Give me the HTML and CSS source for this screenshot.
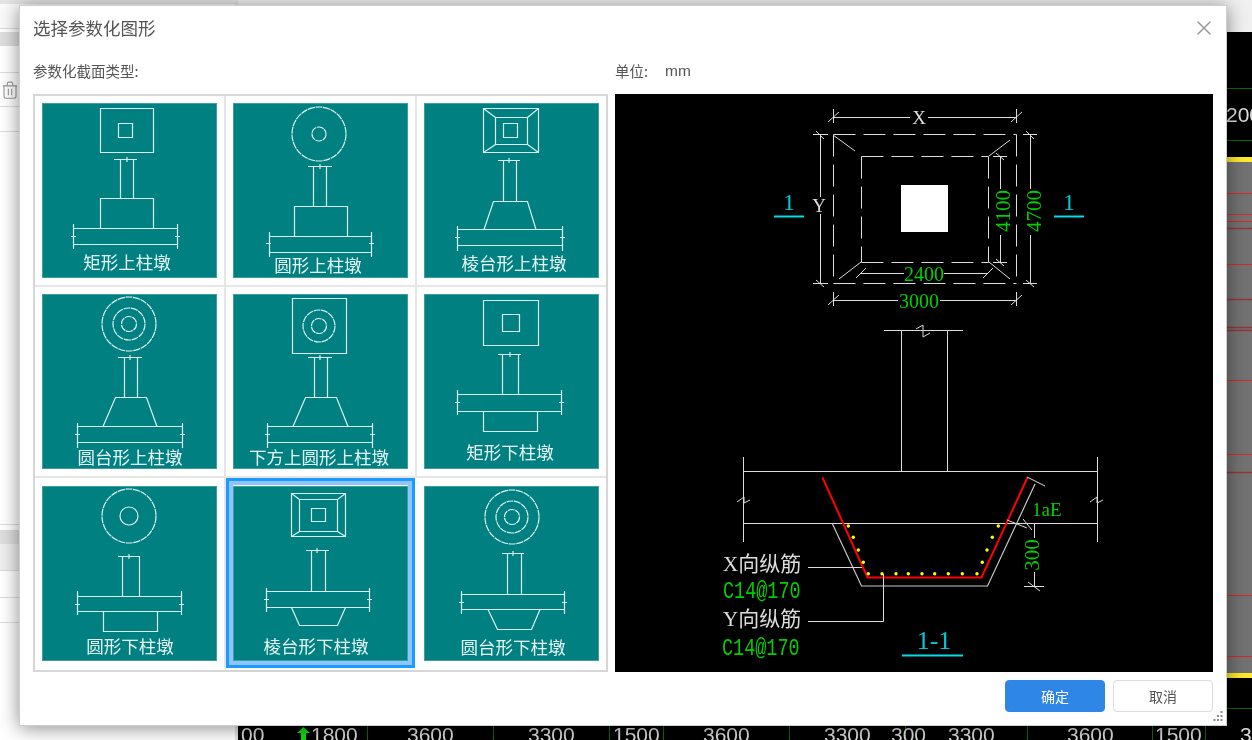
FILE: index.html
```html
<!DOCTYPE html>
<html lang="zh-CN">
<head>
<meta charset="utf-8">
<title>选择参数化图形</title>
<link rel="stylesheet" href="styles.css">
</head>
<body>
<div class="app">
  <aside class="side">
    <div class="side-tabs"></div>
    <div class="side-band"></div>
    <div class="side-row side-row-a"></div>
    <div class="side-row side-row-trash">
      <svg class="trash" width="16" height="18" viewBox="2 1 14 16.500"><path d="M2.500 5.500H15.500M6.500 5.500V3.500Q6.500 2 8 2H10Q11.500 2 11.500 3.500V5.500M3.500 5.500V15Q3.500 16.800 5.300 16.800H12.700Q14.500 16.800 14.500 15V5.500M7.500 8V14M10.500 8V14"/></svg>
    </div>
    <div class="side-row side-row-b"></div>
    <div class="side-spacer"></div>
    <div class="side-row side-row-c"></div>
    <div class="side-band side-band-b"></div>
    <div class="side-row side-row-d"></div>
    <div class="side-row side-row-e"></div>
    <div class="side-row side-row-f"></div>
  </aside>
  <svg class="cad" width="1014" height="740" viewBox="238 0 1014 740">
    <rect x="238" y="0" width="1014" height="32" fill="#f0f0f0"/>
    <rect x="238" y="32" width="1014" height="126" fill="#000"/>
    <rect x="238" y="157" width="1014" height="5" fill="#ffe92e"/>
    <rect x="238" y="162" width="1014" height="511" fill="#727272"/>
    <rect x="238" y="673" width="1014" height="5" fill="#ffe92e"/>
    <rect x="238" y="678" width="1014" height="62" fill="#000"/>
    <path class="cad-green" d="M238 88.500H1252M238 140.500H1252M238 708.500H1252M367.500 726V740M493.500 726V740M609.500 726V740M663.500 726V740M789.500 726V740M905.500 726V740M1027.500 726V740M1152.500 726V740M1205.500 726V740"/>
    <path class="cad-red" d="M1227 193.500H1252M1227 214.500H1252M1227 221.500H1252M1227 264.500H1252M1227 380.500H1252M1227 454.500H1252M1227 595.500H1252M1227 656.500H1252"/>
    <path class="cad-red-dim" d="M1227 228.500H1252M1227 299.500H1252M1227 327.500H1252M1227 330.500H1252M1227 472.500H1252"/>
    <polygon class="cad-arrow" points="303.500,727 310,733 306,733 306,740 301,740 301,733 297,733"/>
    <text class="cad-num" x="1226" y="122">200</text>
    <text class="cad-num" x="241" y="742">00</text>
    <text class="cad-num" x="311" y="742">1800</text>
    <text class="cad-num" x="407" y="742">3600</text>
    <text class="cad-num" x="528" y="742">3300</text>
    <text class="cad-num" x="613" y="742">1500</text>
    <text class="cad-num" x="703" y="742">3600</text>
    <text class="cad-num" x="824" y="742">3300</text>
    <text class="cad-num" x="891" y="742">300</text>
    <text class="cad-num" x="948" y="742">3300</text>
    <text class="cad-num" x="1067" y="742">3600</text>
    <text class="cad-num" x="1155" y="742">1500</text>
    <text class="cad-num" x="1240" y="742">3</text>
  </svg>

  <section class="dialog">
    <header class="dialog-head">
      <h1 class="dialog-title">选择参数化图形</h1>
      <svg class="dialog-close" width="16" height="16" viewBox="0 0 16 16"><path d="M1.500 1.500L14.500 14.500M14.500 1.500L1.500 14.500"/></svg>
    </header>
    <div class="dialog-labels">
      <div class="label-left">参数化截面类型:</div>
      <div class="label-right"><span>单位:</span><span class="unit">mm</span></div>
    </div>
    <div class="dialog-body">
      <div class="picker">
        <div class="cell">
          <svg class="tile" width="175" height="175" viewBox="0 0 175 175">
            <path class="ln" d="M58.500 5.500H111.500V49.500H58.500ZM76.500 20.500H90.500V34.500H76.500ZM72 56.500H95M85 54V59M78.500 56.500V95.500M91.500 56.500V95.500M58.500 125.500V95.500H111.500V125.500M31 125.500H135M31 141.500H135M31.500 121V146M135.500 121V146M29 133.500H34M133 133.500H138"/>
            <text class="cap" x="85" y="160">矩形上柱墩</text>
          </svg>
        </div>
        <div class="cell">
          <svg class="tile" width="175" height="175" viewBox="0 0 175 175">
            <circle class="ln dot" cx="86" cy="31" r="27"/><circle class="ln dot" cx="86" cy="31" r="7"/>
            <path class="ln" d="M75 63.500H99M87 61V66M80.500 63.500V103.500M93.500 63.500V103.500M61.500 133.500V103.500H114.500V133.500M36 133.500H138M36 149.500H138M36.500 129V154M138.500 129V154M33 140.500H38M136 140.500H141"/>
            <text class="cap" x="85" y="163">圆形上柱墩</text>
          </svg>
        </div>
        <div class="cell cell-end">
          <svg class="tile" width="175" height="175" viewBox="0 0 175 175">
            <path class="ln" d="M59.500 5.500H114.500V49.500H59.500ZM71.500 14.500H103.500V41.500H71.500ZM79.500 20.500H93.500V34.500H79.500ZM59.500 5.500L71.500 14.500M114.500 5.500L103.500 14.500M59.500 49.500L71.500 41.500M114.500 49.500L103.500 41.500M74 57.500H96M85 55V60M79.500 57.500V98.500M92.500 57.500V98.500M60 126.500L69.500 98.500H103.500L112 126.500M33 126.500H138M33 142.500H138M33.500 123V148M138.500 123V148M31 134.500H36M136 134.500H141"/>
            <text class="cap" x="90" y="161.500">棱台形上柱墩</text>
          </svg>
        </div>
        <div class="cell">
          <svg class="tile" width="175" height="175" viewBox="0 0 175 175">
            <circle class="ln dot" cx="87" cy="30" r="27"/><circle class="ln dot" cx="87" cy="30" r="16"/><circle class="ln dot" cx="87" cy="30" r="7.500"/>
            <path class="ln" d="M76 63.500H100M88 61V66M82.500 63.500V103.500M95.500 63.500V103.500M61 132.500L73.500 103.500H104.500L115 132.500M35 132.500H140M35 148.500H140M35.500 129V154M140.500 129V154M33 140.500H38M138 140.500H143"/>
            <text class="cap" x="88" y="164">圆台形上柱墩</text>
          </svg>
        </div>
        <div class="cell">
          <svg class="tile" width="175" height="175" viewBox="0 0 175 175">
            <path class="ln" d="M59.500 4.500H113.500V59.500H59.500Z"/>
            <circle class="ln dot" cx="86" cy="32" r="16"/><circle class="ln dot" cx="86" cy="32" r="7.500"/>
            <path class="ln" d="M75 63.500H99M87 61V66M81.500 63.500V103.500M94.500 63.500V103.500M60 132.500L72.500 103.500H103.500L115 132.500M34 132.500H139M34 148.500H139M34.500 129V154M139.500 129V154M32 140.500H37M137 140.500H142"/>
            <text class="cap" x="86" y="164">下方上圆形上柱墩</text>
          </svg>
        </div>
        <div class="cell cell-end">
          <svg class="tile" width="175" height="175" viewBox="0 0 175 175">
            <path class="ln" d="M59.500 6.500H114.500V51.500H59.500ZM78.500 20.500H95.500V37.500H78.500ZM74 60.500H97M86 58V63M78.500 60.500V100.500M94.500 60.500V100.500M33 100.500H137M33 117.500H137M33.500 96V121M137.500 96V121M31 108.500H36M135 108.500H140M59.500 117.500V137.500H113.500V117.500"/>
            <text class="cap" x="86" y="159">矩形下柱墩</text>
          </svg>
        </div>
        <div class="cell cell-low">
          <svg class="tile" width="175" height="175" viewBox="0 0 175 175">
            <circle class="ln dot" cx="87" cy="30" r="27"/><circle class="ln" cx="87" cy="30" r="9"/>
            <path class="ln" d="M76 70.500H98M87 68V73M80.500 70.500V110.500M97.500 70.500V110.500M35 110.500H139M35 125.500H139M35.500 105V129M139.500 105V129M33 118.500H38M137 118.500H142M61.500 125.500V145.500H115.500V125.500"/>
            <text class="cap" x="88" y="161">圆形下柱墩</text>
          </svg>
        </div>
        <div class="cell cell-low cell-selected">
          <svg class="tile" width="175" height="175" viewBox="0 0 175 175">
            <path class="ln" d="M58.500 7.500H112.500V50.500H58.500ZM66.500 13.500H104.500V45.500H66.500ZM78.500 22.500H92.500V35.500H78.500ZM58.500 7.500L66.500 13.500M112.500 7.500L104.500 13.500M58.500 50.500L66.500 45.500M112.500 50.500L104.500 45.500M73 64.500H96M84 62V67M78.500 64.500V105.500M92.500 64.500V105.500M33 105.500H136M33 121.500H136M33.500 102V126M136.500 102V126M31 113.500H36M134 113.500H139M58.500 121.500L66.500 139.500H104.500L112.500 121.500"/>
            <text class="cap" x="83" y="161">棱台形下柱墩</text>
          </svg>
        </div>
        <div class="cell cell-low cell-end">
          <svg class="tile" width="175" height="175" viewBox="0 0 175 175">
            <circle class="ln dot" cx="88" cy="31" r="27"/><circle class="ln dot" cx="88" cy="31" r="16"/><circle class="ln dot" cx="88" cy="31" r="7.500"/>
            <path class="ln" d="M78 67.500H100M89 65V70M83.500 67.500V108.500M97.500 67.500V108.500M37 108.500H140M37 123.500H140M37.500 105V128M140.500 105V128M35 116.500H40M138 116.500H143M64 123.500L73.500 143.500H107.500L116 123.500"/>
            <text class="cap" x="89" y="162">圆台形下柱墩</text>
          </svg>
        </div>
      </div>
      <svg class="preview" width="598" height="578" viewBox="615 94 598 578">
        <rect x="615" y="94" width="598" height="578" fill="#000"/>
        <path class="dw" d="M833.500 109V123M1016.500 109V123M833 117.500H910M928 117.500H1016M828 122L839 112M1011 122L1022 112"/>
        <path class="dw dw-dash" d="M833.500 134.500H1016.500M1016.500 134.500V283.500M833.500 134.500V283.500M833.500 283.500H1016.500M861.500 156.500H988.500M988.500 156.500V262.500M861.500 156.500V262.500M861.500 262.500H988.500"/>
        <path class="dw" d="M833 135L855 151M1010 140L989 156M861 262L839 279M989 262L1010 279"/>
        <rect x="901" y="185" width="47" height="47" fill="#fff"/>
        <path class="dw" d="M820.500 135V197M820.500 214V283M813 134.500H828M813 283.500H828M816 131L824 139M816 280L824 287M1030.500 135V189M1030.500 235V283M1023 134.500H1037M1023 283.500H1037M1026 131L1034 139M1026 280L1034 287M1000.500 156V189M1000.500 235V262M993 156.500H1007M993 262.500H1007M996 153L1004 160M996 259L1004 266M861 273.500H904M944 273.500H988M856 278L866 268M983 278L993 268M833 300.500H898M940 300.500H1016M833.500 292V306M1016.500 292V306M828 305L839 295M1011 305L1022 295"/>
        <text class="dim dim-white" x="919" y="117">X</text>
        <text class="dim dim-white" x="819" y="205">Y</text>
        <text class="dim dim-green dim-flat" x="924" y="274">2400</text>
        <text class="dim dim-green dim-flat" x="919" y="301">3000</text>
        <text class="dim dim-green" x="1003" y="211" transform="rotate(-90 1003 211)">4100</text>
        <text class="dim dim-green" x="1034" y="211" transform="rotate(-90 1034 211)">4700</text>
        <text class="dim dim-cyan" x="789" y="202">1</text>
        <text class="dim dim-cyan" x="1069" y="202">1</text>
        <path class="dc" d="M774 216.500H804M1054 216.500H1084M902 655.500H963"/>

        <path class="dw" d="M884 330.500H963M901.500 331V471M947.500 331V471M916 329L923 325V337L930 333M743.500 457V542M1097.500 457V542M744 471.500H1097M744 523.500H1097M737 502L744 497V503L750 500M1090 502L1097 497V503L1103 500"/>
        <path class="dg" d="M832.500 524L861.500 586H987.500L1035 484"/>
        <path class="dr" d="M822.500 477.500L867.500 577.500H981.500L1027.500 477.500"/>
        <path class="dw" d="M1027 477L1045 486M1007 520L1027 528M1034.500 524V538M1034.500 572V586M1024 586.500H1044M1028 582L1040 591M1023 519L1032 530M808 567.500H862M808 621.500H883.500V574"/>
        <g class="dots">
          <circle cx="868.300" cy="573.700" r="1.700"/><circle cx="882" cy="573.700" r="1.700"/><circle cx="896" cy="573.700" r="1.700"/><circle cx="908.300" cy="573.700" r="1.700"/><circle cx="922" cy="573.700" r="1.700"/><circle cx="934.700" cy="573.700" r="1.700"/><circle cx="948.300" cy="573.700" r="1.700"/><circle cx="962.300" cy="573.700" r="1.700"/><circle cx="977" cy="573.700" r="1.700"/>
          <circle cx="848.300" cy="526" r="1.700"/><circle cx="853.300" cy="537.300" r="1.700"/><circle cx="858.300" cy="550" r="1.700"/><circle cx="863.300" cy="562.300" r="1.700"/>
          <circle cx="998.300" cy="526" r="1.700"/><circle cx="992.300" cy="537.300" r="1.700"/><circle cx="987" cy="550" r="1.700"/><circle cx="982.300" cy="562.300" r="1.700"/>
        </g>
        <text class="dim dim-green dim-small" x="1032" y="509">1aE</text>
        <text class="dim dim-green" x="1032" y="555" transform="rotate(-90 1032 555)">300</text>
        <text class="note note-white" x="723" y="564">X向纵筋</text>
        <text class="note note-green" x="723" y="591">C14@170</text>
        <text class="note note-white" x="723" y="619">Y向纵筋</text>
        <text class="note note-green" x="722" y="648">C14@170</text>
        <text class="dim dim-cyan dim-big" x="934" y="640">1-1</text>
      </svg>
    </div>
    <footer class="dialog-foot">
      <button class="btn btn-primary" type="button">确定</button>
      <button class="btn" type="button">取消</button>
    </footer>
    <svg class="grip" width="11" height="11" viewBox="0 0 11 11">
      <rect x="8.500" y="0" width="2" height="2"/><rect x="5" y="4" width="2" height="2"/><rect x="8.500" y="4" width="2" height="2"/><rect x="1.500" y="8" width="2" height="2"/><rect x="5" y="8" width="2" height="2"/><rect x="8.500" y="8" width="2" height="2"/>
    </svg>
  </section>
</div>
</body>
</html>
```
FILE: styles.css
```css
* { box-sizing: border-box; }
html, body { margin: 0; padding: 0; }
body {
  width: 1252px;
  height: 740px;
  overflow: hidden;
  background: #fff;
  font-family: "Noto Sans CJK SC", "Liberation Sans", sans-serif;
}
.app {
  position: relative;
  display: flex;
  width: 1252px;
  height: 740px;
  overflow: hidden;
  filter: blur(0.3px);
}

/* background application */
.side {
  width: 238px;
  height: 740px;
  flex: none;
  display: flex;
  flex-direction: column;
  background: #fff;
  border-right: 3px solid #e2e2e2;
}
.side-tabs { height: 29px; flex: none; background: linear-gradient(#e4e4e4 0 4px, #fafafa 4px); border-bottom: 1px solid #ddd; }
.side-band { height: 14px; flex: none; margin-top: 3px; background: #dedede; }
.side-row { flex: none; border-bottom: 1px solid #dcdcdc; }
.side-row-a { height: 27px; }
.side-row-trash { height: 34px; padding: 8px 0 0 2px; }
.side-row-b { height: 25px; }
.side-spacer { flex: 1; }
.side-row-c { height: 1px; }
.side-band-b { margin-top: 5px; }
.side-row-d { height: 27px; background: #eee; }
.side-row-e { height: 27px; }
.side-row-f { height: 25px; margin-bottom: 117px; }
.trash { display: block; fill: none; stroke: #999; stroke-width: 1; }

.cad { display: block; flex: none; }
.cad-green { fill: none; stroke: #0a6a0a; stroke-width: 1; }
.cad-red { fill: none; stroke: #e0262a; stroke-width: 1; }
.cad-red-dim { fill: none; stroke: #93363a; stroke-width: 1.500; }
.cad-arrow { fill: #0be00b; }
.cad-num { fill: #ddd; font-family: "Liberation Sans", sans-serif; font-size: 21px; }

/* dialog */
.dialog {
  position: absolute;
  left: 19px;
  top: 5px;
  width: 1208px;
  height: 721px;
  display: flex;
  flex-direction: column;
  padding: 0 13px 0 13px;
  background: #fff;
  border: 1px solid #cfcfcf;
  box-shadow: 0 2px 18px rgba(0, 0, 0, 0.46);
}
.dialog-head {
  display: flex;
  align-items: center;
  justify-content: space-between;
  height: 44px;
  flex: none;
}
.dialog-title {
  margin: 0;
  font-size: 17.500px;
  font-weight: 400;
  line-height: 44px;
  color: #555;
}
.dialog-close {
  display: block;
  margin-right: 1px;
  fill: none;
  stroke: #999;
  stroke-width: 1.500;
}
.dialog-labels {
  display: flex;
  height: 44px;
  flex: none;
  padding-top: 9px;
  font-size: 14.500px;
  line-height: 24px;
  color: #555;
}
.label-left { width: 582px; flex: none; }
.label-right { display: flex; gap: 17px; }
.unit { font-family: "Liberation Sans", sans-serif; font-size: 15.500px; }

.dialog-body {
  display: flex;
  gap: 7px;
  height: 578px;
  flex: none;
}
.picker {
  display: grid;
  grid-template-columns: 191px 191px 189px;
  grid-template-rows: 191px 191px 192px;
  width: 575px;
  height: 578px;
  flex: none;
  border: 2px solid #d6d6d6;
}
.cell {
  padding: 7px 0 0 7px;
  border-right: 2px solid #e6e6e6;
  border-bottom: 2px solid #e6e6e6;
}
.cell-end { border-right: 0; }
.cell-low { padding-top: 8px; border-bottom-color: #fff; }
.cell-selected {
  box-shadow: inset 0 0 0 3px #1b9aff, inset 0 0 0 7px #8fc5ff;
  border-right-color: #fff;
}
.tile { display: block; background: #008080; box-shadow: inset 0 0 0 1px #3f9f9f; }
.ln { fill: none; stroke: #dcf1f1; stroke-width: 1.200; }
.dot { stroke-dasharray: 7 0.700; }
.cap {
  fill: #e6f5f5;
  font-size: 17.500px;
  text-anchor: middle;
  dominant-baseline: central;
  transform: translateY(-2px);
}

.preview { display: block; flex: none; }
.dw { fill: none; stroke: #dcdcdc; stroke-width: 1; }
.dw-dash { stroke-dasharray: 22 8; }
.dc { fill: none; stroke: #00dcea; stroke-width: 2; }
.dg { fill: none; stroke: #c8c8c8; stroke-width: 1.200; }
.dr { fill: none; stroke: #f00; stroke-width: 2; }
.dots { fill: #ff0; }
.dim {
  font-family: "Liberation Serif", serif;
  font-size: 21px;
  text-anchor: middle;
  dominant-baseline: central;
}
.dim-flat { font-size: 20px; }
.dim-white { fill: #ddd; font-size: 19px; }
.dim-green { fill: #00d000; }
.dim-cyan { fill: #00c8d8; font-size: 24px; }
.dim-small { font-size: 19px; text-anchor: start; }
.dim-big { font-size: 26px; }
.note { dominant-baseline: central; transform-box: fill-box; transform-origin: center; }
.note-white { fill: #ddd; font-family: "Liberation Serif", "Noto Sans CJK SC", serif; font-size: 21px; }
.note-green { fill: #00d000; font-family: "Liberation Mono", monospace; font-size: 18.500px; transform: scaleY(1.3); }

.dialog-foot {
  display: flex;
  justify-content: flex-end;
  gap: 8px;
  padding-top: 8px;
}
.btn {
  width: 100px;
  height: 32px;
  padding: 0;
  border: 1.500px solid #dcdcdc;
  border-radius: 4px;
  background: #fff;
  color: #555;
  font-family: inherit;
  font-size: 14px;
}
.btn-primary { border-color: #2e86e6; background: #2e86e6; color: #fff; }
.grip {
  position: absolute;
  right: 3px;
  bottom: 3px;
  fill: #8a8a8a;
}
```
